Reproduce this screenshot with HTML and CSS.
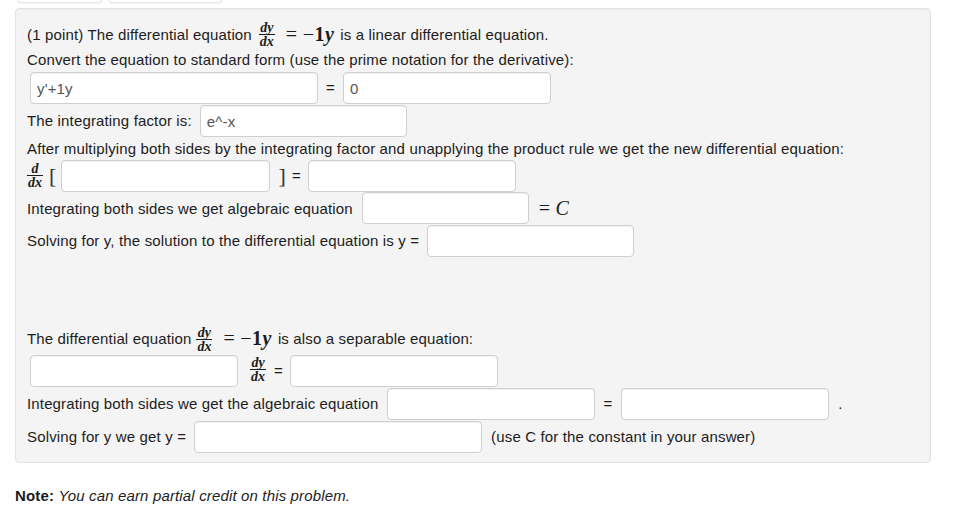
FILE: index.html
```html
<!DOCTYPE html>
<html>
<head>
<meta charset="utf-8">
<link rel="stylesheet" href="styles.css">
</head>
<body>
<div class="page">
  <div class="tabs"><div class="tab t1"></div><div class="tab t2"></div></div>
  <div class="well">
    <div class="row h28">
      <span>(1 point) The differential equation</span>
      <span class="frac f1"><span class="num">dy</span><span class="den">dx</span></span>
      <span class="math eqn"><span class="rel">=</span>−<b>1</b><i>y</i></span>
      <span class="after">is a linear differential equation.</span>
    </div>
    <div class="row h23"><span>Convert the equation to standard form (use the prime notation for the derivative):</span></div>
    <div class="row h33">
      <input class="inp w288 ml3" type="text" value="y'+1y">
      <span class="eq e1">=</span>
      <input class="inp w208" type="text" value="0">
    </div>
    <div class="row h33">
      <span>The integrating factor is:</span>
      <input class="inp w206 ml8" type="text" value="e^-x">
    </div>
    <div class="row h22"><span>After multiplying both sides by the integrating factor and unapplying the product rule we get the new differential equation:</span></div>
    <div class="row h33">
      <span class="frac f2"><span class="num">d</span><span class="den">dx</span></span>
      <span class="brk bl">[</span>
      <input class="inp w209" type="text">
      <span class="brk br">]</span>
      <span class="eq e2">=</span>
      <input class="inp w207" type="text">
    </div>
    <div class="row h32">
      <span>Integrating both sides we get algebraic equation</span>
      <input class="inp w166 ml9" type="text">
      <span class="math eqc"><span class="rel">=</span><i>C</i></span>
    </div>
    <div class="row h33">
      <span>Solving for y, the solution to the differential equation is y =</span>
      <input class="inp w206 ml8" type="text">
    </div>
    <div class="spacer"></div>
    <div class="row h32">
      <span>The differential equation</span>
      <span class="frac f3"><span class="num">dy</span><span class="den">dx</span></span>
      <span class="math eqn"><span class="rel">=</span>−<b>1</b><i>y</i></span>
      <span class="after">is also a separable equation:</span>
    </div>
    <div class="row h33">
      <input class="inp w207 ml3" type="text">
      <span class="frac f4"><span class="num">dy</span><span class="den">dx</span></span>
      <span class="eq e3">=</span>
      <input class="inp w207" type="text">
    </div>
    <div class="row h33">
      <span>Integrating both sides we get the algebraic equation</span>
      <input class="inp w208 ml9" type="text">
      <span class="eq e4">=</span>
      <input class="inp w207" type="text">
      <span class="dot">.</span>
    </div>
    <div class="row h33">
      <span>Solving for y we get y =</span>
      <input class="inp w288 ml8" type="text">
      <span class="hint">(use C for the constant in your answer)</span>
    </div>
  </div>
  <p class="note"><b>Note:</b> <i>You can earn partial credit on this problem.</i></p>
</div>
</body>
</html>
```

FILE: styles.css
```css
html, body {
  margin: 0;
  padding: 0;
  background: #fff;
}
body {
  font-family: "Liberation Sans", Arial, sans-serif;
  font-size: 15px;
  letter-spacing: 0.15px;
  color: #1c1c1c;
}
.page {
  padding-left: 15px;
  width: 916px;
}
.tabs {
  display: flex;
  height: 3px;
  margin-bottom: 5px;
}
.tab {
  height: 2px;
  background: #fff;
  border: 1px solid #e6e6e6;
  border-top: none;
  border-radius: 0 0 4px 4px;
  box-shadow: 0 1px 1px rgba(0,0,0,0.04);
}
.t1 { width: 83px; margin-left: 2px; }
.t2 { width: 111px; margin-left: 7px; }
.well {
  background: #f4f4f4;
  border: 1px solid #e3e3e3;
  border-radius: 4px;
  box-shadow: inset 0 1px 1px rgba(0,0,0,0.04);
  padding: 11px 11px 9px 11px;
}
.row {
  display: flex;
  align-items: center;
  white-space: nowrap;
}
.h22 { height: 22px; }
.h23 { height: 23px; }
.h28 { height: 28px; }
.h32 { height: 32px; }
.h33 { height: 33px; }
.spacer { height: 65px; }

.inp {
  box-sizing: border-box;
  height: 32px;
  align-self: flex-end;
  background: #fff;
  border: 1px solid #cfcfcf;
  border-radius: 4px;
  box-shadow: inset 0 1px 1px rgba(0,0,0,0.06);
  padding: 0 6px;
  font-family: "Liberation Sans", Arial, sans-serif;
  font-size: 15px;
  letter-spacing: 0.15px;
  color: #555;
  margin: 0;
  outline: none;
}
.w166 { width: 167px; }
.w206 { width: 207px; }
.w207 { width: 208px; }
.w208 { width: 208px; }
.w209 { width: 209px; }
.w288 { width: 288px; }
.ml3 { margin-left: 3px; }
.ml8 { margin-left: 8px; }
.ml9 { margin-left: 9px; }

.frac {
  display: inline-flex;
  flex-direction: column;
  align-items: center;
  font-family: "Liberation Serif", "Times New Roman", serif;
  font-style: italic;
  font-weight: bold;
  font-size: 14px;
  letter-spacing: 0;
  line-height: 11px;
}
.frac .num { padding: 0 1px 1px; }
.frac .den {
  border-top: 1px solid #1c1c1c;
  padding: 1px 1px 0;
  align-self: stretch;
  text-align: center;
}
.f1 { margin-left: 7px; }
.f2 { margin-left: 0; }
.f3 { margin-left: 5px; margin-top: 2px; }
.f4 { margin-left: 12px; margin-top: -3px; }

.math {
  font-family: "Liberation Serif", "Times New Roman", serif;
  font-size: 20px;
  letter-spacing: 0.5px;
}
.math .rel { margin: 0 5px 0 2px; }
.math b { font-weight: bold; }
.math i { font-style: italic; font-weight: bold; }
.eqn { margin-left: 9px; }
.after { margin-left: 6px; }
.eqc { margin-left: 8px; }
.eqc i { font-weight: normal; }

.brk {
  font-family: "Liberation Serif", "Times New Roman", serif;
  font-size: 22px;
  font-weight: normal;
  color: #333;
}
.bl { margin-left: 6px; margin-right: 5px; }
.br { margin-left: 8px; }
.eq { font-size: 15px; }
.e1 { margin-left: 8px; margin-right: 8px; }
.e2 { margin-left: 6px; margin-right: 7px; }
.e3 { margin-left: 8px; margin-right: 7px; }
.e4 { margin-left: 8px; margin-right: 9px; }
.dot { margin-left: 9px; }
.hint { margin-left: 9px; }

.note {
  margin: 24px 0 0 0;
  color: #1c1c1c;
}
.note b { font-weight: bold; }
```
